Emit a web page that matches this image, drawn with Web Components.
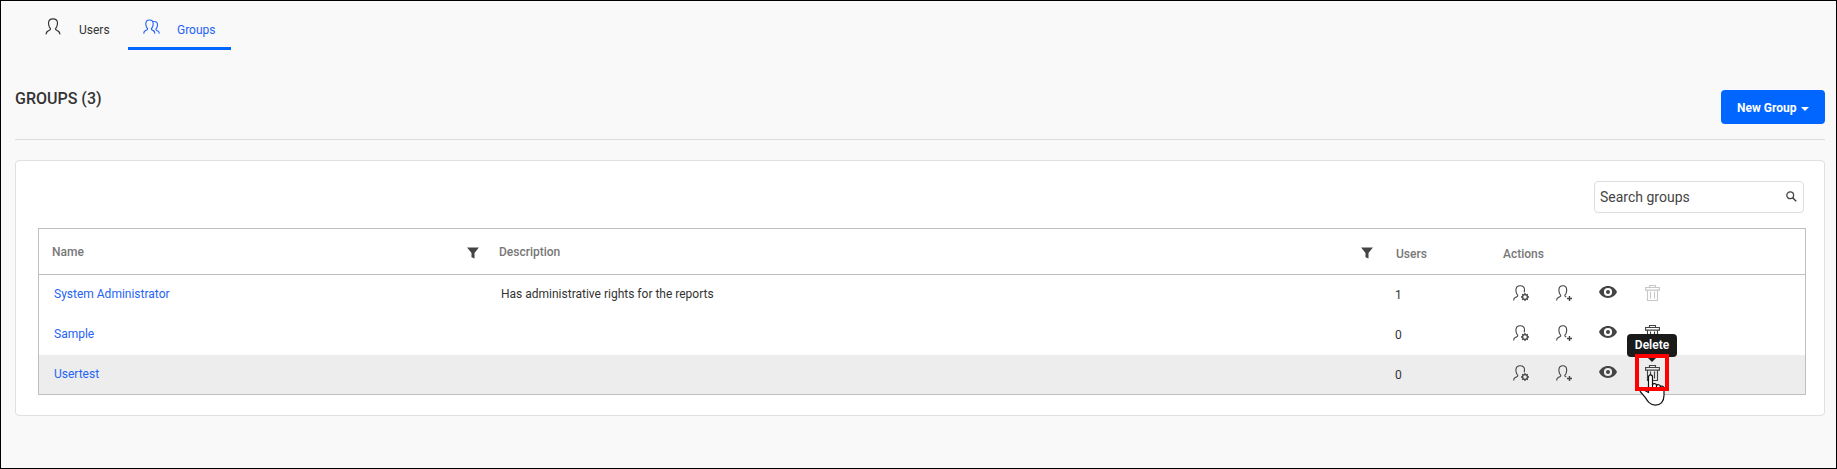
<!DOCTYPE html>
<html lang="en">
<head>
<meta charset="utf-8">
<title>Groups</title>
<style>
html,body{margin:0;height:100%}
body{font:12px/16px Roboto,"Liberation Sans",sans-serif;color:#333;background:#f9f9f9}
</style>
</head>
<body>
<groups-page></groups-page>
<script>
const define=(name,html)=>customElements.define(name,class extends HTMLElement{
  connectedCallback(){
    if(this.shadowRoot)return;
    const t=document.createElement('template');
    t.innerHTML=typeof html==='function'?html(this):html;
    this.attachShadow({mode:'open'}).append(t.content.cloneNode(true));
  }
});

const icons={
  user:['0 0 16 17','<path d="M1 16.4c.1-2.1.8-2.9 2.2-3.5 1.3-.5 2.3-.8 2.3-1.8 0-.8-.6-1.2-1.1-2.2-.5-1.1-.9-2.3-.9-3.9C3.500 2.400 4.900.800 8 .800s4.500 1.600 4.500 4.200c0 1.600-.4 2.800-.9 3.900-.5 1-1.100 1.400-1.100 2.200 0 1 1 1.300 2.300 1.800 1.400.6 2.100 1.400 2.200 3.500" fill="none" stroke="currentColor" stroke-width="1.150"/>'],
  users:['0 0 17 16','<path d="M.7 14.600c.1-1.900.7-2.600 1.900-3.100 1.300-.5 2-.7 2-1.500S4 8.900 3.500 8c-.4-.9-.7-2-.7-3.300C2.800 2.300 4 1 6.500 1s3.700 1.300 3.700 3.700c0 1.300-.3 2.400-.7 3.300-.5.900-1.100 1.200-1.100 2s.6.900 1.600 1.400c1.200.5 1.800 1.300 1.900 3.200M9.500 2.700c.5-.2 1.200-.3 1.900-.2 2.200.1 3.100 1.300 3.100 3.300 0 1.200-.3 2.100-.7 2.900-.4.800-.9 1.100-.9 1.700 0 .7.700.9 1.600 1.400 1.200.5 1.700 1.100 1.800 2.800" fill="none" stroke="currentColor" stroke-width="1.150"/>'],
  gear:['0 0 16 16','<path d="M.6 15.500c.1-1.900.7-2.700 2-3.200 1.300-.5 2.200-.7 2.200-1.600 0-.8-.6-1.100-1.100-2-.5-1-.8-2.200-.8-3.600C2.900 2.500 4.200.7 7.200.7s4.300 1.800 4.300 4.100c0 .8-.1 1.700-.3 2.600" fill="none" stroke="currentColor" stroke-width="1.100"/><circle cx="12" cy="12" r="2.400" fill="none" stroke="currentColor" stroke-width="1.200"/><path d="M12 8v1.500m0 5V16M8 12h1.500m5 0H16M9.200 9.200l1 1m3.600 3.600 1 1m0-5.600-1 1m-3.600 3.600-1 1" stroke="currentColor" stroke-width="1.300"/>'],
  plus:['0 0 16 16','<path d="M.6 15.500c.1-1.900.7-2.700 2-3.200 1.300-.5 2.200-.7 2.200-1.600 0-.8-.6-1.100-1.100-2-.5-1-.8-2.200-.8-3.600C2.900 2.500 4 .7 6.800.7s3.900 1.800 3.900 4.400c0 1.400-.3 2.600-.8 3.600-.5.9-1.100 1.200-1.100 2 0 .8.700 1.100 1.600 1.400" fill="none" stroke="currentColor" stroke-width="1.100"/><path d="M13.500 11v5M11 13.500h5" stroke="currentColor" stroke-width="1.400"/>'],
  eye:['0 0 18 12','<path fill-rule="evenodd" d="M0 6C1.700 2.300 5 .1 9 .1S16.300 2.300 18 6c-1.700 3.700-5 5.900-9 5.900S1.700 9.700 0 6zm9-4.100a4.100 4.100 0 1 0 0 8.200 4.100 4.100 0 0 0 0-8.200z" fill="currentColor"/><circle cx="9" cy="6" r="2" fill="currentColor"/>'],
  trash:['0 0 15 16','<path d="M4.500 2.500v-2h6v2M.6 2.500h13.800v2.600H.6zM2.500 5.100v10.400h10V5.100M5.500 6.500v7M9.500 6.500v7" fill="none" stroke="currentColor" stroke-width="1.150"/>'],
  filter:['0 0 12 12','<path d="M.1.400h11.800L7.500 6v5.600l-3-1.400V6z" fill="currentColor"/>'],
  search:['0 0 11 11','<circle cx="4.200" cy="4.300" r="3.400" fill="none" stroke="currentColor" stroke-width="1.300"/><path d="m6.600 6.700 3.600 3.600" stroke="currentColor" stroke-width="1.600"/>'],
  hand:['0 0 28 34','<path d="M9.500 19.500V4.100c0-3 4-3 4 0v7.600c.6-1.600 3.900-1.300 4 .7.900-1.300 3.700-.8 3.900 1 1.400-.9 3.600 0 3.600 2v7.200c0 6-3.500 9.500-8.500 9.500-5.500 0-8-4-10.500-8L1.600 19c-1.300-2 .8-3.600 2.800-2.200z" fill="#fff" stroke="#111" stroke-width="1.200" stroke-linejoin="round"/><path d="M13.500 11v3.500m4-2.600v3m3.900-1.800v2.200" stroke="#111" stroke-width="1.200"/>']
};
define('ui-icon',el=>{
  const [box,body]=icons[el.getAttribute('name')], [,,w,h]=box.split(' ');
  return `<style>:host{display:block;flex:none;width:${w}px;height:${h}px}svg{display:block}</style><svg width="${w}" height="${h}" viewBox="${box}">${body}</svg>`;
});

define('nav-tab',`<style>
:host{display:flex;box-sizing:border-box;height:49px;border-bottom:3px solid transparent;color:#333}
:host([active]){border-color:#06f;color:#2563f5}
.label{padding-top:21px;white-space:nowrap}
</style><slot name="icon"></slot><span class="label"><slot></slot></span>`);

define('drop-button',`<style>
:host{display:block}
button{display:flex;align-items:center;box-sizing:border-box;width:104px;height:34px;padding:1px 0 0 16px;border:0;border-radius:4px;background:#06f;color:#fff;font:700 12px/16px Roboto,sans-serif;white-space:nowrap}
i{margin:2px 0 0 5px;border:4px solid transparent;border-top-color:#fff;border-bottom:0}
</style><button><slot></slot><i></i></button>`);

define('search-box',`<style>
:host{display:flex;box-sizing:border-box;width:210px;height:32px;padding:6px 6px 0 5px;border:1px solid #ddd;border-radius:4px;background:#fff;font-size:14px;line-height:18px;justify-content:space-between;color:#444}
ui-icon{margin-top:3px}
</style><span><slot></slot></span><ui-icon name="search"></ui-icon>`);

define('delete-hint',`<style>
:host{position:absolute;left:-10px;top:-11px;width:34px;height:37px}
.frame{position:absolute;inset:0;border:4px solid #f00}
.tip{position:absolute;left:-8px;top:-20px;width:50px;height:23px;border-radius:4px;background:#1a1a1a;color:#fff;text-align:center;font:600 12px/22px Roboto,sans-serif}
.arrow{position:absolute;left:12px;top:3px;border:5px solid transparent;border-top-color:#1a1a1a;border-bottom:0}
ui-icon{position:absolute;left:4px;top:19px}
</style><div class="tip"><slot></slot></div><div class="arrow"></div><ui-icon name="hand"></ui-icon><div class="frame"></div>`);

define('group-row',el=>`<style>
:host{display:grid;grid-template-columns:447px 894px 107px 1fr;height:40px}
:host([hover]){background:#ededed;height:39px}
span{padding-top:11px;white-space:nowrap}
.name{padding-left:15px;color:#2563f5}
.desc{padding-left:15px}
.count{padding:12px 0 0 15px}
.actions{display:flex;padding:10px 0 0 26px;color:#444}
.plus{margin-left:27px}.eye{margin:1px 0 0 27px}
.trash{position:relative;margin-left:28px;width:15px;height:16px}
:host([locked]) .trash ui-icon{color:#c8c8c8}
</style><span class="name"><slot></slot></span><span class="desc"><slot name="description"></slot></span><span class="count"><slot name="users"></slot></span>
<div class="actions"><ui-icon name="gear"></ui-icon><ui-icon class="plus" name="plus"></ui-icon><ui-icon class="eye" name="eye"></ui-icon><div class="trash"><ui-icon name="trash"></ui-icon>${el.hasAttribute('hover')?'<delete-hint>Delete</delete-hint>':''}</div></div>`);

define('group-table',`<style>
:host{display:block;box-sizing:border-box;border:1px solid #bfbfbf}
header{display:grid;grid-template-columns:447px 894px 107px 1fr;height:45px;border-bottom:1px solid #bfbfbf;font-weight:500;color:#777}
header>div{display:flex;justify-content:space-between;padding:15px 7px 0 13px}
header ui-icon{color:#444;margin-top:3px}
header>.low{padding:17px 0 0 16px}
</style><header><div>Name<ui-icon name="filter"></ui-icon></div><div>Description<ui-icon name="filter"></ui-icon></div><div class="low">Users</div><div class="low">Actions</div></header><slot></slot>`);

define('groups-page',`<style>
:host{display:block;box-sizing:border-box;height:469px;border:1px solid #000;padding:0 11px 0 14px;background:#f9f9f9}
nav{display:flex;padding-left:29px}
.u{width:84px}.u ui-icon{margin:17px 18px 0 1px}
.g{width:103px}.g ui-icon{margin:18px 17px 0 15px}
.top{display:flex;justify-content:space-between;box-sizing:border-box;height:90px;border-bottom:1px solid #ddd}
h1{margin:38px 0 0;font-size:16px;line-height:22px;font-weight:500}
drop-button{margin-top:40px}
.card{display:flex;flex-direction:column;box-sizing:border-box;height:256px;margin-top:20px;border:1px solid #e0e0e0;border-radius:4px;background:#fff;padding:20px 18px 0 22px}
search-box{align-self:flex-end;margin:0 2px 15px 0}
</style>
<nav><nav-tab class="u"><ui-icon slot="icon" name="user"></ui-icon>Users</nav-tab><nav-tab class="g" active><ui-icon slot="icon" name="users"></ui-icon>Groups</nav-tab></nav>
<div class="top"><h1>GROUPS (3)</h1><drop-button>New Group</drop-button></div>
<section class="card"><search-box>Search groups</search-box>
<group-table>
<group-row locked>System Administrator<span slot="description">Has administrative rights for the reports</span><span slot="users">1</span></group-row>
<group-row>Sample<span slot="users">0</span></group-row>
<group-row hover>Usertest<span slot="users">0</span></group-row>
</group-table></section>`);
</script>
</body>
</html>
